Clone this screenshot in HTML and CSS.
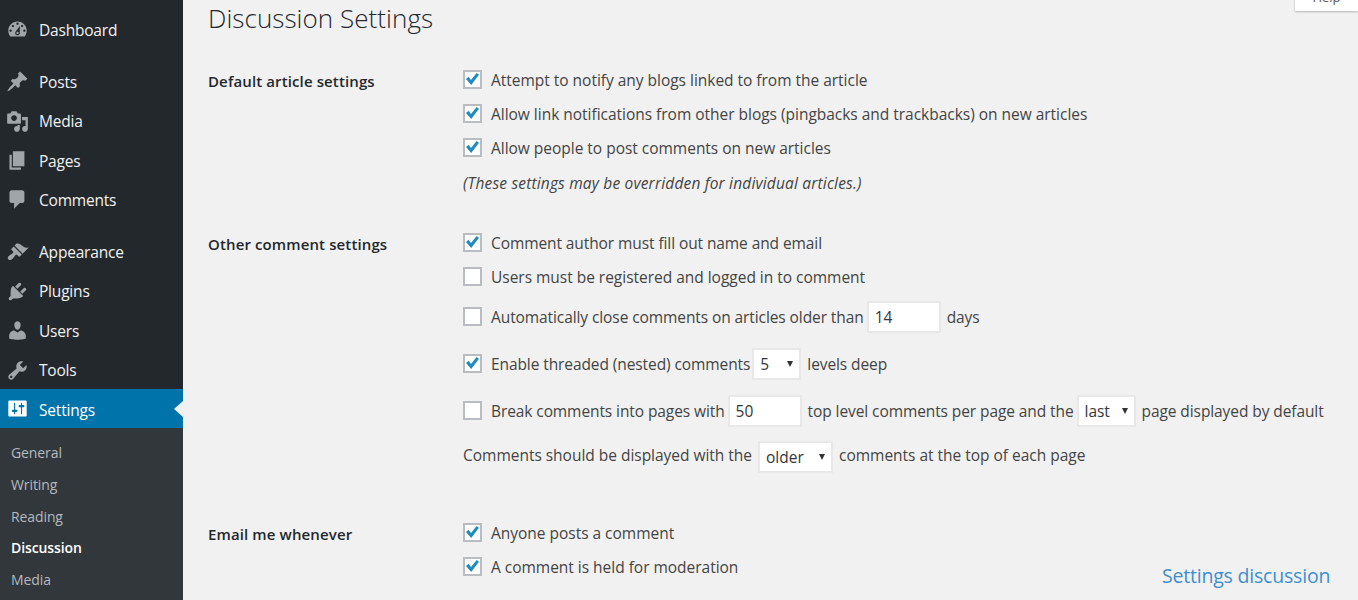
FILE: index.html
```html
<!DOCTYPE html>
<html lang="en">
<head>
<meta charset="utf-8">
<title>Discussion Settings</title>
<link rel="stylesheet" href="styles.css">
</head>
<body>
<div class="shell">
  <nav class="sidebar">
    <ul class="menu">
      <li class="item first"><svg class="icon" viewBox="0 0 20 20"><path fill-rule="evenodd" d="M3.76 16h12.48c1.1-1.37 1.76-3.11 1.76-5 0-4.42-3.58-8-8-8s-8 3.58-8 8c0 1.89.66 3.63 1.76 5zM10 4c.55 0 1 .45 1 1s-.45 1-1 1-1-.45-1-1 .45-1 1-1zM6 6c.55 0 1 .45 1 1s-.45 1-1 1-1-.45-1-1 .45-1 1-1zm8 0c.55 0 1 .45 1 1s-.45 1-1 1-1-.45-1-1 .45-1 1-1zm-5.37 5.55L12 7v6c0 1.1-.9 2-2 2s-2-.9-2-2c0-.57.24-1.08.63-1.45zM4 10c.55 0 1 .45 1 1s-.45 1-1 1-1-.45-1-1 .45-1 1-1zm12 0c.55 0 1 .45 1 1s-.45 1-1 1-1-.45-1-1 .45-1 1-1zm-5 3c0-.55-.45-1-1-1s-1 .45-1 1 .45 1 1 1 1-.45 1-1z"/></svg>Dashboard</li>
      <li class="item gap"><svg class="icon" viewBox="0 0 20 20"><path d="M10.44 3.02l1.82-1.82 6.36 6.35-1.83 1.82c-1.05-.68-2.48-.57-3.41.36l-.75.75c-.92.93-1.04 2.35-.35 3.41l-1.83 1.82-2.41-2.41-2.8 2.79c-.42.42-3.38 2.71-3.8 2.29s1.86-3.39 2.28-3.81l2.79-2.79L4.1 9.36l1.83-1.82c1.05.69 2.48.57 3.4-.36l.75-.75c.93-.92 1.05-2.35.36-3.41z"/></svg>Posts</li>
      <li class="item"><svg class="icon" viewBox="0 0 20 20"><path fill-rule="evenodd" d="M13 11V4c0-.55-.45-1-1-1h-1.67L9 1H5L3.67 3H2c-.55 0-1 .45-1 1v7c0 .55.45 1 1 1h10c.55 0 1-.45 1-1zM7 4.5c1.38 0 2.5 1.12 2.5 2.5S8.38 9.5 7 9.5 4.5 8.38 4.5 7 5.62 4.5 7 4.5zM14 6h5v10.5c0 1.38-1.12 2.5-2.5 2.5S14 17.88 14 16.5s1.12-2.5 2.5-2.5c.17 0 .34.02.5.05V9h-3V6zm-4 8.05V13h2v3.5c0 1.38-1.12 2.5-2.5 2.5S7 17.88 7 16.5 8.12 14 9.5 14c.17 0 .34.02.5.05z"/></svg>Media</li>
      <li class="item"><svg class="icon" viewBox="0 0 20 20"><path d="M6 15V2h10v13H6zm-1 1h8v2H3V5h2v11z"/></svg>Pages</li>
      <li class="item"><svg class="icon" viewBox="0 0 20 20"><path d="M5 2h9c1.1 0 2 .9 2 2v7c0 1.1-.9 2-2 2h-2l-5 5v-5H5c-1.1 0-2-.9-2-2V4c0-1.1.9-2 2-2z"/></svg>Comments</li>
      <li class="item gap"><svg class="icon" viewBox="0 0 20 20"><path d="M14.48 11.06L7.41 3.99l1.5-1.5c.5-.56 2.3-.47 3.51.32 1.21.8 1.43 1.28 2.91 2.1 1.18.64 2.45 1.26 4.45.85zm-.71.71L6.7 4.7 4.93 6.47c-.39.39-.39 1.02 0 1.41l1.06 1.06c.39.39.39 1.03 0 1.42-.6.6-1.43 1.11-2.21 1.69-.35.26-.7.53-1.01.84C1.43 13.71 1.19 15.15 2.1 16.06c.92.91 2.36.67 3.7-.67.31-.31.58-.66.84-1.01.58-.78 1.09-1.61 1.69-2.21.39-.39 1.03-.39 1.42 0l1.06 1.06c.39.39 1.02.39 1.41 0z"/></svg>Appearance</li>
      <li class="item"><svg class="icon" viewBox="0 0 20 20"><path d="M13.11 4.36L9.87 7.6 8 5.73l3.24-3.24c.35-.34 1.05-.2 1.56.32.52.51.66 1.21.31 1.55zm-8 1.77l.91-1.12 9.01 9.01-1.19.84c-.71.71-2.63 1.16-3.82 1.16H6.14L4.9 17.26c-.59.59-1.54.59-2.12 0-.59-.58-.59-1.53 0-2.12l1.24-1.24v-3.88c0-1.13.4-3.19 1.09-3.89zm7.26 3.97l3.24-3.24c.34-.35 1.04-.21 1.55.31.52.51.66 1.21.31 1.55l-3.24 3.25z"/></svg>Plugins</li>
      <li class="item"><svg class="icon" viewBox="0 0 20 20"><path d="M10 9.25c-2.27 0-2.73-3.44-2.73-3.44C7 4.02 7.82 2 9.97 2c2.16 0 2.98 2.02 2.71 3.81 0 0-.41 3.44-2.68 3.44zm0 2.57L12.72 10c2.39 0 4.52 2.33 4.52 4.53v2.49s-3.65 1.13-7.24 1.13c-3.65 0-7.24-1.13-7.24-1.13v-2.49c0-2.25 1.94-4.48 4.47-4.48z"/></svg>Users</li>
      <li class="item"><svg class="icon" viewBox="0 0 20 20"><path fill-rule="evenodd" d="M16.68 9.77c-1.34 1.34-3.3 1.67-4.95.99l-5.41 6.52c-.99.99-2.59.99-3.58 0s-.99-2.59 0-3.57l6.52-5.42c-.68-1.65-.35-3.61.99-4.95 1.28-1.28 3.12-1.62 4.72-1.06l-2.89 2.89 2.82 2.82 2.86-2.87c.53 1.58.18 3.39-1.08 4.65zM3.81 16.21c.4.39 1.04.39 1.43 0 .4-.4.4-1.04 0-1.43-.39-.4-1.03-.4-1.43 0-.39.39-.39 1.03 0 1.43z"/></svg>Tools</li>
      <li class="item current"><svg class="icon" viewBox="0 0 20 20"><path fill-rule="evenodd" d="M18 16V4c0-.55-.45-1-1-1H3c-.55 0-1 .45-1 1v12c0 .55.45 1 1 1h14c.55 0 1-.45 1-1zM8 11h1c.55 0 1 .45 1 1s-.45 1-1 1H8v1.5c0 .28-.22.5-.5.5s-.5-.22-.5-.5V13H6c-.55 0-1-.45-1-1s.45-1 1-1h1V5.5c0-.28.22-.5.5-.5s.5.22.5.5V11zm5-2h-1c-.55 0-1-.45-1-1s.45-1 1-1h1V5.5c0-.28.22-.5.5-.5s.5.22.5.5V7h1c.55 0 1 .45 1 1s-.45 1-1 1h-1v5.5c0 .28-.22.5-.5.5s-.5-.22-.5-.5V9z"/></svg>Settings</li>
    </ul>
    <ul class="submenu">
      <li>General</li>
      <li>Writing</li>
      <li>Reading</li>
      <li class="active">Discussion</li>
      <li>Media</li>
    </ul>
  </nav>
  <main class="content">
    <h1 class="title">Discussion Settings</h1>
    <section class="group">
      <h2 class="heading">Default article settings</h2>
      <div class="fields">
        <label class="row"><input type="checkbox" class="cb" checked>Attempt to notify any blogs linked to from the article</label>
        <label class="row"><input type="checkbox" class="cb" checked>Allow link notifications from other blogs (pingbacks and trackbacks) on new articles</label>
        <label class="row"><input type="checkbox" class="cb" checked>Allow people to post comments on new articles</label>
        <p class="row note">(These settings may be overridden for individual articles.)</p>
      </div>
    </section>
    <section class="group second">
      <h2 class="heading">Other comment settings</h2>
      <div class="fields">
        <label class="row tight"><input type="checkbox" class="cb" checked>Comment author must fill out name and email</label>
        <label class="row"><input type="checkbox" class="cb">Users must be registered and logged in to comment</label>
        <label class="row r46 tight"><input type="checkbox" class="cb">Automatically close comments on articles older than<span class="box w74">14</span><span class="after">days</span></label>
        <label class="row r48 tight"><input type="checkbox" class="cb" checked>Enable threaded (nested) comments<span class="box sel w49">5</span><span class="after">levels deep</span></label>
        <label class="row r46 tight"><input type="checkbox" class="cb">Break comments into pages with<span class="box w74">50</span><span class="after">top level comments per page and the</span><span class="box sel w59">last</span><span class="after">page displayed by default</span></label>
        <div class="row r42">Comments should be displayed with the<span class="box sel w75 wide">older</span><span class="after">comments at the top of each page</span></div>
      </div>
    </section>
    <section class="group third">
      <h2 class="heading">Email me whenever</h2>
      <div class="fields">
        <label class="row"><input type="checkbox" class="cb" checked>Anyone posts a comment</label>
        <label class="row"><input type="checkbox" class="cb" checked>A comment is held for moderation</label>
      </div>
    </section>
  </main>
</div>
<div class="help">Help</div>
<div class="caption">Settings discussion</div>
</body>
</html>
```

FILE: styles.css
```css
* { box-sizing: border-box; }
html, body { margin: 0; height: 600px; overflow: hidden; }
body { background: #f1f1f1; font-family: "Open Sans", "Liberation Sans", sans-serif; color: #444; position: relative; }
ul { list-style: none; margin: 0; padding: 0; }
.shell { display: flex; height: 600px; }
.sidebar { width: 183px; flex: none; background: #23282d; color: #eee; }
.menu { padding-top: 10px; }
.item { height: 39.3px; display: flex; align-items: center; font-size: 15.5px; letter-spacing: -.2px; color: #f1f1f1; padding-left: 6px; }
.item.gap { margin-top: 13px; }
.icon { width: 23px; height: 23px; fill: #a0a5aa; margin-right: 10px; flex: none; }
.current { background: #0073aa; color: #fff; position: relative; margin-top: -1px; padding-top: 3px; }
.current .icon { fill: #fff; margin-top: -2px; }
.current::after { content: ""; position: absolute; right: 0; top: 12px; border: 8px solid transparent; border-left: 0; border-right-color: #f1f1f1; border-right-width: 9px; }
.submenu { background: #32373c; padding-top: 9px; height: 172px; }
.submenu li { height: 31.7px; display: flex; align-items: center; padding-left: 11px; font-size: 14px; letter-spacing: -.1px; color: #b4b9be; }
.submenu .active { color: #fff; font-weight: 600; }
.content { flex: 1; padding-left: 25px; min-width: 0; }
.title { margin: 0; height: 62px; font-size: 26px; line-height: 36px; font-weight: 300; color: #23282d; letter-spacing: .05px; }
.group { display: flex; }
.second { margin-top: 24px; }
.third { margin-top: 40px; }
.heading { width: 255px; flex: none; margin: 0; font-size: 15px; line-height: 39px; font-weight: 600; color: #23282d; letter-spacing: .12px; }
.row { display: flex; align-items: center; height: 34px; margin: 0; padding-top: 1px; font-size: 15.5px; letter-spacing: -.02px; white-space: nowrap; }
.tight { letter-spacing: -.09px; }
.note { height: 36px; margin-top: 1px; padding-top: 0; font-style: italic; letter-spacing: .17px; }
.r46 { height: 46px; }
.r48 { height: 48px; }
.r42 { height: 42px; }
.cb { appearance: none; width: 19px; height: 19px; margin: -1px 9px 0 0; flex: none; background: #fff; border: 2px solid #b9bdc1; display: flex; align-items: center; justify-content: center; }
.cb:checked::before { content: ""; width: 13px; height: 12px; background: #1e8cbe; clip-path: polygon(0 50%, 20% 32%, 38% 58%, 82% 0, 100% 14%, 40% 100%); }
.box { display: inline-flex; align-items: center; height: 32px; margin-left: 3px; padding: 1px 0 0 6px; background: #fff; border: 2px solid #e8e8e8; color: #32373c; position: relative; }
.sel::after { content: ""; position: absolute; right: 6px; top: 11px; border: 3.5px solid transparent; border-top: 6px solid #333; border-bottom: 0; }
.wide { margin: 4px 0 0 6px; }
.w49 { width: 49px; margin-left: 2px; }
.w59 { width: 59px; }
.w74 { width: 74px; }
.w75 { width: 75px; }
.after { margin-left: 6px; }
.help { position: absolute; right: 0; top: -13px; width: 63px; height: 24px; background: #fff; box-shadow: 0 1px 2px rgba(0,0,0,.25); text-align: center; font-size: 13px; line-height: 20px; color: #555; }
.caption { position: absolute; left: 1162px; top: 561px; font-size: 19.5px; line-height: 30px; color: #3d8fd1; letter-spacing: -.2px; }
```
